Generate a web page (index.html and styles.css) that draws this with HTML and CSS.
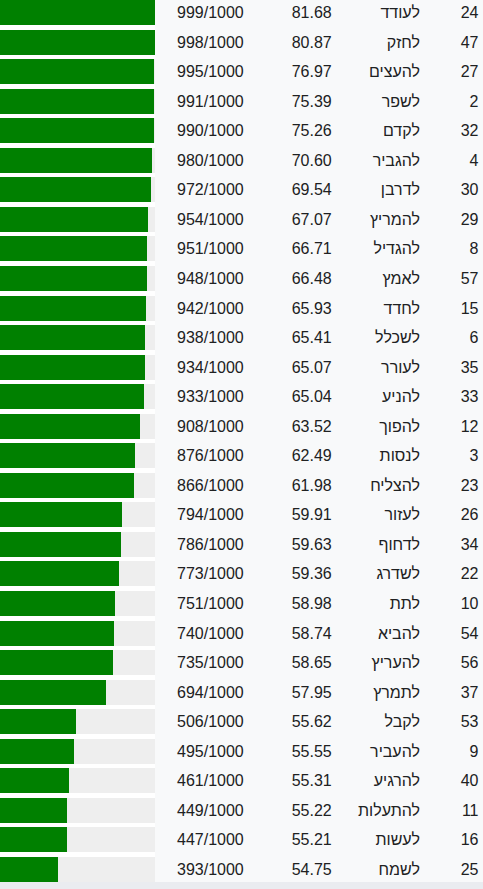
FILE: index.html
```html
<!DOCTYPE html>
<html lang="he">
<head>
<meta charset="utf-8">
<title>דירוג</title>
<link rel="stylesheet" href="styles.css">
</head>
<body>
<div class="table">
  <div class="row"><div class="bar"><div class="track"><div class="fill" style="width:154.94px"></div></div></div><div class="frac">999/1000</div><div class="score">81.68</div><div class="word" dir="rtl">לעודד</div><div class="rank">24</div></div>
  <div class="row"><div class="bar"><div class="track"><div class="fill" style="width:154.78px"></div></div></div><div class="frac">998/1000</div><div class="score">80.87</div><div class="word" dir="rtl">לחזק</div><div class="rank">47</div></div>
  <div class="row"><div class="bar"><div class="track"><div class="fill" style="width:154.30px"></div></div></div><div class="frac">995/1000</div><div class="score">76.97</div><div class="word" dir="rtl">להעצים</div><div class="rank">27</div></div>
  <div class="row"><div class="bar"><div class="track"><div class="fill" style="width:153.66px"></div></div></div><div class="frac">991/1000</div><div class="score">75.39</div><div class="word" dir="rtl">לשפר</div><div class="rank">2</div></div>
  <div class="row"><div class="bar"><div class="track"><div class="fill" style="width:153.50px"></div></div></div><div class="frac">990/1000</div><div class="score">75.26</div><div class="word" dir="rtl">לקדם</div><div class="rank">32</div></div>
  <div class="row"><div class="bar"><div class="track"><div class="fill" style="width:151.90px"></div></div></div><div class="frac">980/1000</div><div class="score">70.60</div><div class="word" dir="rtl">להגביר</div><div class="rank">4</div></div>
  <div class="row"><div class="bar"><div class="track"><div class="fill" style="width:150.62px"></div></div></div><div class="frac">972/1000</div><div class="score">69.54</div><div class="word" dir="rtl">לדרבן</div><div class="rank">30</div></div>
  <div class="row"><div class="bar"><div class="track"><div class="fill" style="width:147.74px"></div></div></div><div class="frac">954/1000</div><div class="score">67.07</div><div class="word" dir="rtl">להמריץ</div><div class="rank">29</div></div>
  <div class="row"><div class="bar"><div class="track"><div class="fill" style="width:147.26px"></div></div></div><div class="frac">951/1000</div><div class="score">66.71</div><div class="word" dir="rtl">להגדיל</div><div class="rank">8</div></div>
  <div class="row"><div class="bar"><div class="track"><div class="fill" style="width:146.78px"></div></div></div><div class="frac">948/1000</div><div class="score">66.48</div><div class="word" dir="rtl">לאמץ</div><div class="rank">57</div></div>
  <div class="row"><div class="bar"><div class="track"><div class="fill" style="width:145.82px"></div></div></div><div class="frac">942/1000</div><div class="score">65.93</div><div class="word" dir="rtl">לחדד</div><div class="rank">15</div></div>
  <div class="row"><div class="bar"><div class="track"><div class="fill" style="width:145.18px"></div></div></div><div class="frac">938/1000</div><div class="score">65.41</div><div class="word" dir="rtl">לשכלל</div><div class="rank">6</div></div>
  <div class="row"><div class="bar"><div class="track"><div class="fill" style="width:144.54px"></div></div></div><div class="frac">934/1000</div><div class="score">65.07</div><div class="word" dir="rtl">לעורר</div><div class="rank">35</div></div>
  <div class="row"><div class="bar"><div class="track"><div class="fill" style="width:144.38px"></div></div></div><div class="frac">933/1000</div><div class="score">65.04</div><div class="word" dir="rtl">להניע</div><div class="rank">33</div></div>
  <div class="row"><div class="bar"><div class="track"><div class="fill" style="width:140.38px"></div></div></div><div class="frac">908/1000</div><div class="score">63.52</div><div class="word" dir="rtl">להפוך</div><div class="rank">12</div></div>
  <div class="row"><div class="bar"><div class="track"><div class="fill" style="width:135.26px"></div></div></div><div class="frac">876/1000</div><div class="score">62.49</div><div class="word" dir="rtl">לנסות</div><div class="rank">3</div></div>
  <div class="row"><div class="bar"><div class="track"><div class="fill" style="width:133.66px"></div></div></div><div class="frac">866/1000</div><div class="score">61.98</div><div class="word" dir="rtl">להצליח</div><div class="rank">23</div></div>
  <div class="row"><div class="bar"><div class="track"><div class="fill" style="width:122.14px"></div></div></div><div class="frac">794/1000</div><div class="score">59.91</div><div class="word" dir="rtl">לעזור</div><div class="rank">26</div></div>
  <div class="row"><div class="bar"><div class="track"><div class="fill" style="width:120.86px"></div></div></div><div class="frac">786/1000</div><div class="score">59.63</div><div class="word" dir="rtl">לדחוף</div><div class="rank">34</div></div>
  <div class="row"><div class="bar"><div class="track"><div class="fill" style="width:118.78px"></div></div></div><div class="frac">773/1000</div><div class="score">59.36</div><div class="word" dir="rtl">לשדרג</div><div class="rank">22</div></div>
  <div class="row"><div class="bar"><div class="track"><div class="fill" style="width:115.26px"></div></div></div><div class="frac">751/1000</div><div class="score">58.98</div><div class="word" dir="rtl">לתת</div><div class="rank">10</div></div>
  <div class="row"><div class="bar"><div class="track"><div class="fill" style="width:113.50px"></div></div></div><div class="frac">740/1000</div><div class="score">58.74</div><div class="word" dir="rtl">להביא</div><div class="rank">54</div></div>
  <div class="row"><div class="bar"><div class="track"><div class="fill" style="width:112.70px"></div></div></div><div class="frac">735/1000</div><div class="score">58.65</div><div class="word" dir="rtl">להעריץ</div><div class="rank">56</div></div>
  <div class="row"><div class="bar"><div class="track"><div class="fill" style="width:106.14px"></div></div></div><div class="frac">694/1000</div><div class="score">57.95</div><div class="word" dir="rtl">לתמרץ</div><div class="rank">37</div></div>
  <div class="row"><div class="bar"><div class="track"><div class="fill" style="width:76.06px"></div></div></div><div class="frac">506/1000</div><div class="score">55.62</div><div class="word" dir="rtl">לקבל</div><div class="rank">53</div></div>
  <div class="row"><div class="bar"><div class="track"><div class="fill" style="width:74.30px"></div></div></div><div class="frac">495/1000</div><div class="score">55.55</div><div class="word" dir="rtl">להעביר</div><div class="rank">9</div></div>
  <div class="row"><div class="bar"><div class="track"><div class="fill" style="width:68.86px"></div></div></div><div class="frac">461/1000</div><div class="score">55.31</div><div class="word" dir="rtl">להרגיע</div><div class="rank">40</div></div>
  <div class="row"><div class="bar"><div class="track"><div class="fill" style="width:66.94px"></div></div></div><div class="frac">449/1000</div><div class="score">55.22</div><div class="word" dir="rtl">להתעלות</div><div class="rank">11</div></div>
  <div class="row"><div class="bar"><div class="track"><div class="fill" style="width:66.62px"></div></div></div><div class="frac">447/1000</div><div class="score">55.21</div><div class="word" dir="rtl">לעשות</div><div class="rank">16</div></div>
  <div class="row"><div class="bar"><div class="track"><div class="fill" style="width:57.98px"></div></div></div><div class="frac">393/1000</div><div class="score">54.75</div><div class="word" dir="rtl">לשמח</div><div class="rank">25</div></div>
</div>
</body>
</html>
```
FILE: styles.css
```css
html, body {
  margin: 0;
  padding: 0;
  background: #eaecf0;
  overflow: hidden;
}
body {
  font-family: "Liberation Sans", Arial, "DejaVu Sans", sans-serif;
  font-size: 16px;
  color: #202122;
}
.table {
  width: 483px;
  margin-top: -4.5px;
  display: flex;
  flex-direction: column;
}
.row {
  display: grid;
  grid-template-columns: 155px 136.7px 60px 68.3px 58.5px 4.5px;
  height: 29.56px;
  background: #f8f9fa;
}
.bar {
  background: #ffffff;
  padding-top: 4.56px;
}
.track {
  height: 25px;
  background: #eeeeee;
}
.fill {
  height: 100%;
  background: #008000;
}
.frac, .score, .word, .rank {
  padding-top: 4.56px;
  line-height: 25px;
  white-space: nowrap;
}
.frac {
  padding-left: 22px;
}
.word, .rank {
  text-align: right;
}
```
